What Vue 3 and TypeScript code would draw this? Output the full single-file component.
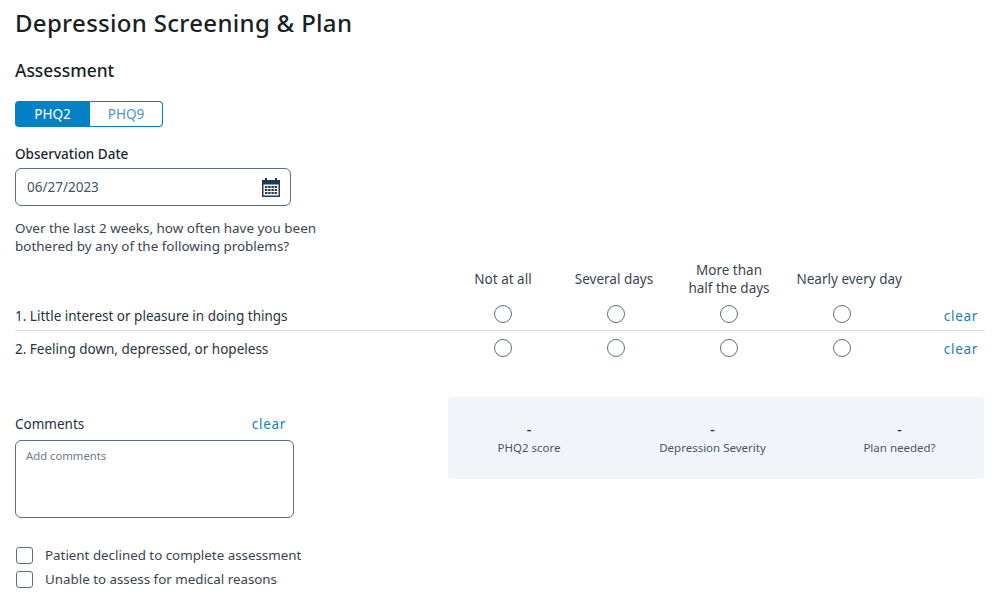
<script setup lang="ts">
const options = ['Not at all', 'Several days', 'More than half the days', 'Nearly every day']
const questions = ['1. Little interest or pleasure in doing things', '2. Feeling down, depressed, or hopeless']
const results = [
  { value: '-', label: 'PHQ2 score' },
  { value: '-', label: 'Depression Severity' },
  { value: '-', label: 'Plan needed?' },
]
const checks = ['Patient declined to complete assessment', 'Unable to assess for medical reasons']
</script>

<template>
  <main class="page">
    <h1>Depression Screening &amp; Plan</h1>
    <h2>Assessment</h2>
    <div class="toggle">
      <button class="on">PHQ2</button>
      <button class="off">PHQ9</button>
    </div>
    <label class="obs">Observation Date</label>
    <div class="date">
      <span>06/27/2023</span>
      <svg width="20" height="20" viewBox="0 0 20 20">
        <path fill="#1f3a57" d="M1 3h3V1h2v2h8V1h2v2h3v17H1z" />
        <rect x="2.5" y="7.5" width="15" height="11" fill="#fff" />
        <g fill="#1f3a57">
          <rect x="4" y="9" width="2.4" height="2" /><rect x="7.2" y="9" width="2.4" height="2" /><rect x="10.4" y="9" width="2.4" height="2" /><rect x="13.6" y="9" width="2.4" height="2" />
          <rect x="4" y="12" width="2.4" height="2" /><rect x="7.2" y="12" width="2.4" height="2" /><rect x="10.4" y="12" width="2.4" height="2" /><rect x="13.6" y="12" width="2.4" height="2" />
          <rect x="4" y="15" width="2.4" height="2" /><rect x="7.2" y="15" width="2.4" height="2" /><rect x="10.4" y="15" width="2.4" height="2" /><rect x="13.6" y="15" width="2.4" height="2" />
        </g>
      </svg>
    </div>
    <p class="prompt">Over the last 2 weeks, how often have you been<br />bothered by any of the following problems?</p>

    <div class="head grid">
      <span></span>
      <span v-for="(o, i) in options" :key="o" class="opt" :class="'opt' + i">{{ o }}</span>
      <span></span>
    </div>
    <div v-for="(q, i) in questions" :key="q" class="row grid" :class="{ ruled: i === 0 }">
      <span class="q">{{ q }}</span>
      <span v-for="o in options" :key="o" class="cell"><i class="radio"></i></span>
      <a class="clear rowclear">clear</a>
    </div>

    <section class="lower">
      <div class="comments">
        <div class="chead"><span>Comments</span><a class="clear">clear</a></div>
        <div class="area">Add comments</div>
      </div>
      <div class="panel">
        <div v-for="r in results" :key="r.label" class="res">
          <b>{{ r.value }}</b>
          <span>{{ r.label }}</span>
        </div>
      </div>
    </section>

    <div class="checks">
      <label v-for="c in checks" :key="c" class="check"><i class="box"></i>{{ c }}</label>
    </div>
  </main>
</template>

<style>
body { background: #fff; }
</style>

<style scoped>
.page {
  box-sizing: border-box;
  width: 998px;
  height: 602px;
  overflow: hidden;
  padding: 8px 13px 0 15px;
  font-family: "Noto Sans", "Open Sans", sans-serif;
  font-size: 13.5px;
  color: #25303b;
}
h1 { margin: 0; font-size: 24px; line-height: 30px; font-weight: 500; color: #1a1f26; letter-spacing: 0.3px; }
h2 { margin: 18px 0 0; font-size: 17.4px; line-height: 28px; font-weight: 500; color: #1a1f26; }
.toggle { display: flex; width: 148px; height: 26px; margin-top: 17px; }
.toggle button { font: inherit; padding: 0; height: 26px; }
.on { width: 75px; background: #0380c6; color: #fff; border: 0; border-radius: 4px 0 0 4px; }
.off { width: 73px; background: #fff; color: #4f93c4; border: 1px solid #0380c6; border-left: 0; border-radius: 0 4px 4px 0; }
.obs { display: block; margin-top: 18px; font-weight: 500; line-height: 18px; color: #1f2731; }
.date {
  box-sizing: border-box; display: flex; align-items: center; justify-content: space-between;
  width: 276px; height: 38px; margin-top: 5px; padding: 0 9px 0 11px;
  border: 1px solid #5d6f84; border-radius: 6px; color: #46525f;
}
.prompt { margin: 13px 0 0; line-height: 18px; color: #3a4450; font-size: 13.45px; }
.grid { display: grid; grid-template-columns: 431.5px repeat(4, 113px) 1fr; width: 970px; align-items: center; }
.head { height: 36px; margin-top: 6px; text-align: center; color: #3a4450; }
.opt { line-height: 18px; white-space: nowrap; }
.opt1 { padding-right: 4px; }
.opt2 { white-space: normal; padding: 0 14px; }
.opt3 { padding-left: 11px; }
.row { height: 33px; }
.ruled { height: 32px; margin-top: 1px; border-bottom: 1px solid #d9d9d9; }
.q { color: #2a333d; padding-top: 2px; }
.ruled .q { padding-top: 4px; }
.cell { display: flex; justify-content: center; }
.radio { box-sizing: border-box; width: 18px; height: 18px; border: 1px solid #5d6f84; border-radius: 50%; }
.clear { color: #1a7fb8; letter-spacing: 0.7px; }
.rowclear { justify-self: end; padding: 2px 7px 0 0; }
.ruled .rowclear { padding-top: 4px; }
.lower { display: flex; justify-content: space-between; margin-top: 33px; padding-right: 1px; }
.comments { width: 279px; margin-top: 18px; }
.chead { display: flex; justify-content: space-between; padding-right: 8px; line-height: 18px; }
.area {
  box-sizing: border-box; height: 78px; margin-top: 7px; padding: 8px 10px;
  border: 1px solid #5d6f84; border-radius: 6px; font-size: 11.3px; line-height: 14px; color: #6d7a88;
}
.panel {
  box-sizing: border-box; display: flex; width: 536px; height: 82px; flex: none; align-self: flex-start;
  background: #f1f4f9; border-radius: 4px; padding-top: 24px;
}
.res { display: flex; flex-direction: column; align-items: center; flex: none; font-size: 11.5px; color: #4b5663; }
.res:nth-child(1) { width: 162px; }
.res:nth-child(2) { width: 205px; }
.res:nth-child(3) { width: 169px; }
.res b { font-weight: 500; font-size: 14px; line-height: 18px; color: #25303b; }
.res span { line-height: 17px; }
.checks { display: flex; flex-direction: column; gap: 6px; margin-top: 28px; }
.check { display: flex; align-items: center; gap: 12px; height: 18px; color: #3a4450; font-size: 13.35px; }
.box { box-sizing: border-box; width: 17px; height: 17px; margin-left: 1px; border: 1px solid #5d6f84; border-radius: 3px; }
</style>
